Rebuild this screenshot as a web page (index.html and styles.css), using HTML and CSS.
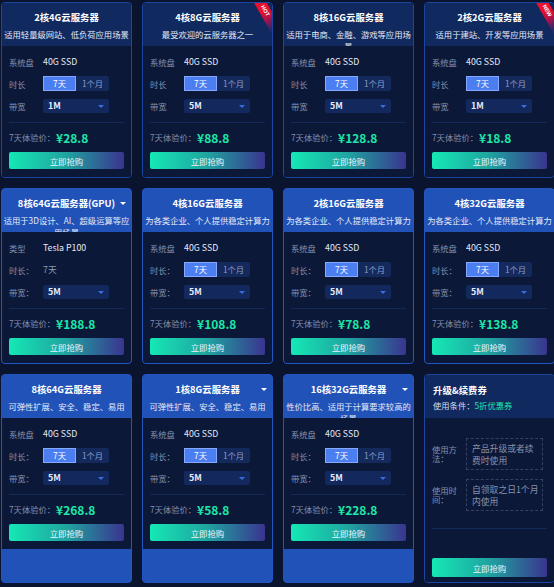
FILE: index.html
```html
<!DOCTYPE html>
<html lang="zh-CN">
<head>
    <meta charset="UTF-8">
    <meta name="viewport" content="width=device-width, initial-scale=1.0">
    <title>云服务器</title>
    <link rel="stylesheet" href="styles.css">
</head>
<body>

    <div class="grid">

        <!-- row 1 -->
        <div class="card">
            <div class="card-head">
                <div class="title">2核4G云服务器</div>
                <div class="sub">适用轻量级网站、低负荷应用场景</div>
            </div>
            <div class="card-body">
                <div class="row"><span class="label">系统盘</span><span class="value">40G SSD</span></div>
                <div class="row"><span class="label">时长</span>
                    <div class="toggle"><span class="opt active">7天</span><span class="opt">1个月</span></div>
                </div>
                <div class="row"><span class="label">带宽</span><div class="select">1M</div></div>
                <div class="divider"></div>
                <div class="price-row"><span class="price-label">7天体验价：</span><span class="price">¥28.8</span></div>
                <button class="buy">立即抢购</button>
            </div>
        </div>

        <div class="card">
            <div class="ribbon">HOT</div>
            <div class="card-head">
                <div class="title">4核8G云服务器</div>
                <div class="sub">最受欢迎的云服务器之一</div>
            </div>
            <div class="card-body">
                <div class="row"><span class="label">系统盘</span><span class="value">40G SSD</span></div>
                <div class="row"><span class="label">时长</span>
                    <div class="toggle"><span class="opt active">7天</span><span class="opt">1个月</span></div>
                </div>
                <div class="row"><span class="label">带宽</span><div class="select">5M</div></div>
                <div class="divider"></div>
                <div class="price-row"><span class="price-label">7天体验价：</span><span class="price">¥88.8</span></div>
                <button class="buy">立即抢购</button>
            </div>
        </div>

        <div class="card">
            <div class="card-head">
                <div class="title">8核16G云服务器</div>
                <div class="sub">适用于电商、金融、游戏等应用场景</div>
            </div>
            <div class="card-body">
                <div class="row"><span class="label">系统盘</span><span class="value">40G SSD</span></div>
                <div class="row"><span class="label">时长</span>
                    <div class="toggle"><span class="opt active">7天</span><span class="opt">1个月</span></div>
                </div>
                <div class="row"><span class="label">带宽</span><div class="select">5M</div></div>
                <div class="divider"></div>
                <div class="price-row"><span class="price-label">7天体验价：</span><span class="price">¥128.8</span></div>
                <button class="buy">立即抢购</button>
            </div>
        </div>

        <div class="card">
            <div class="ribbon">NEW</div>
            <div class="card-head">
                <div class="title">2核2G云服务器</div>
                <div class="sub">适用于建站、开发等应用场景</div>
            </div>
            <div class="card-body">
                <div class="row"><span class="label">系统盘</span><span class="value">40G SSD</span></div>
                <div class="row"><span class="label">时长</span>
                    <div class="toggle"><span class="opt active">7天</span><span class="opt">1个月</span></div>
                </div>
                <div class="row"><span class="label">带宽</span><div class="select">1M</div></div>
                <div class="divider"></div>
                <div class="price-row"><span class="price-label">7天体验价：</span><span class="price">¥18.8</span></div>
                <button class="buy">立即抢购</button>
            </div>
        </div>

        <!-- row 2 -->
        <div class="card blue">
            <div class="card-head">
                <div class="title">8核64G云服务器(GPU)</div>
                <span class="caret"></span>
                <div class="sub">适用于3D设计、AI、超级运算等应用场景</div>
            </div>
            <div class="card-body">
                <div class="row"><span class="label">类型</span><span class="value">Tesla P100</span></div>
                <div class="row"><span class="label">时长：</span><span class="value plain">7天</span></div>
                <div class="row"><span class="label">带宽：</span><div class="select">5M</div></div>
                <div class="divider"></div>
                <div class="price-row"><span class="price-label">7天体验价：</span><span class="price">¥188.8</span></div>
                <button class="buy">立即抢购</button>
            </div>
        </div>

        <div class="card blue">
            <div class="card-head">
                <div class="title">4核16G云服务器</div>
                <div class="sub">为各类企业、个人提供稳定计算力</div>
            </div>
            <div class="card-body">
                <div class="row"><span class="label">系统盘</span><span class="value">40G SSD</span></div>
                <div class="row"><span class="label">时长：</span>
                    <div class="toggle"><span class="opt active">7天</span><span class="opt">1个月</span></div>
                </div>
                <div class="row"><span class="label">带宽：</span><div class="select">5M</div></div>
                <div class="divider"></div>
                <div class="price-row"><span class="price-label">7天体验价：</span><span class="price">¥108.8</span></div>
                <button class="buy">立即抢购</button>
            </div>
        </div>

        <div class="card blue">
            <div class="card-head">
                <div class="title">2核16G云服务器</div>
                <div class="sub">为各类企业、个人提供稳定计算力</div>
            </div>
            <div class="card-body">
                <div class="row"><span class="label">系统盘</span><span class="value">40G SSD</span></div>
                <div class="row"><span class="label">时长：</span>
                    <div class="toggle"><span class="opt active">7天</span><span class="opt">1个月</span></div>
                </div>
                <div class="row"><span class="label">带宽：</span><div class="select">5M</div></div>
                <div class="divider"></div>
                <div class="price-row"><span class="price-label">7天体验价：</span><span class="price">¥78.8</span></div>
                <button class="buy">立即抢购</button>
            </div>
        </div>

        <div class="card blue">
            <div class="card-head">
                <div class="title">4核32G云服务器</div>
                <div class="sub">为各类企业、个人提供稳定计算力</div>
            </div>
            <div class="card-body">
                <div class="row"><span class="label">系统盘</span><span class="value">40G SSD</span></div>
                <div class="row"><span class="label">时长：</span>
                    <div class="toggle"><span class="opt active">7天</span><span class="opt">1个月</span></div>
                </div>
                <div class="row"><span class="label">带宽：</span><div class="select">5M</div></div>
                <div class="divider"></div>
                <div class="price-row"><span class="price-label">7天体验价：</span><span class="price">¥138.8</span></div>
                <button class="buy">立即抢购</button>
            </div>
        </div>

        <!-- row 3 -->
        <div class="card blue">
            <div class="card-head">
                <div class="title">8核64G云服务器</div>
                <div class="sub">可弹性扩展、安全、稳定、易用</div>
            </div>
            <div class="card-body">
                <div class="row"><span class="label">系统盘</span><span class="value">40G SSD</span></div>
                <div class="row"><span class="label">时长：</span>
                    <div class="toggle"><span class="opt active">7天</span><span class="opt">1个月</span></div>
                </div>
                <div class="row"><span class="label">带宽：</span><div class="select">5M</div></div>
                <div class="divider"></div>
                <div class="price-row"><span class="price-label">7天体验价：</span><span class="price">¥268.8</span></div>
                <button class="buy">立即抢购</button>
            </div>
        </div>

        <div class="card blue">
            <div class="card-head">
                <div class="title">1核8G云服务器</div>
                <span class="caret"></span>
                <div class="sub">可弹性扩展、安全、稳定、易用</div>
            </div>
            <div class="card-body">
                <div class="row"><span class="label">系统盘</span><span class="value">40G SSD</span></div>
                <div class="row"><span class="label">时长：</span>
                    <div class="toggle"><span class="opt active">7天</span><span class="opt">1个月</span></div>
                </div>
                <div class="row"><span class="label">带宽：</span><div class="select">5M</div></div>
                <div class="divider"></div>
                <div class="price-row"><span class="price-label">7天体验价：</span><span class="price">¥58.8</span></div>
                <button class="buy">立即抢购</button>
            </div>
        </div>

        <div class="card blue">
            <div class="card-head">
                <div class="title">16核32G云服务器</div>
                <span class="caret"></span>
                <div class="sub">性价比高、适用于计算要求较高的场景</div>
            </div>
            <div class="card-body">
                <div class="row"><span class="label">系统盘</span><span class="value">40G SSD</span></div>
                <div class="row"><span class="label">时长：</span>
                    <div class="toggle"><span class="opt active">7天</span><span class="opt">1个月</span></div>
                </div>
                <div class="row"><span class="label">带宽：</span><div class="select">5M</div></div>
                <div class="divider"></div>
                <div class="price-row"><span class="price-label">7天体验价：</span><span class="price">¥228.8</span></div>
                <button class="buy">立即抢购</button>
            </div>
        </div>

        <div class="card coupon">
            <div class="card-head">
                <div class="title">升级&amp;续费券</div>
                <div class="cond">使用条件：<span class="green">5折优惠券</span></div>
            </div>
            <div class="card-body">
                <div class="c-row">
                    <span class="c-label">使用方法：</span>
                    <div class="c-box">产品升级或者续费时使用</div>
                </div>
                <div class="c-row">
                    <span class="c-label">使用时间：</span>
                    <div class="c-box">自领取之日1个月内使用</div>
                </div>
                <div class="divider"></div>
                <button class="buy">立即抢购</button>
            </div>
        </div>

    </div>

</body>
</html>
```

FILE: styles.css
```css
body {
    margin: 0;
    background-color: #0a142f;
    font-family: "Noto Sans CJK SC", "Noto Sans", sans-serif;
    font-size: 8.3px;
    color: #dfe6f5;
}
.grid {
    display: grid;
    grid-template-columns: repeat(4, 131px);
    grid-template-rows: 176px 176px 209px;
    column-gap: 10px;
    row-gap: 10px;
    padding: 2px 0 0 1px;
}
.card {
    position: relative;
    display: flex;
    flex-direction: column;
    background-color: #0b1838;
    border: 1px solid #1b47a3;
    border-radius: 4px;
    overflow: hidden;
}
.card.blue {
    background-color: #2152b8;
    border-color: #2456bf;
}
.card-head {
    position: relative;
    height: 43px;
    flex-shrink: 0;
    padding: 7px 0 0;
    box-sizing: border-box;
    text-align: center;
    background-color: #10295f;
    overflow: hidden;
}
.card.blue .card-head {
    background-color: transparent;
}
.title {
    font-size: 9.4px;
    font-weight: bold;
    line-height: 14px;
    color: #ffffff;
}
.sub {
    margin-top: 4px;
    line-height: 12px;
    color: #e4eaf8;
}
.caret {
    position: absolute;
    right: 5px;
    top: 13px;
    border-left: 3px solid transparent;
    border-right: 3px solid transparent;
    border-top: 3px solid #ffffff;
}
.ribbon {
    position: absolute;
    left: 93px;
    top: 4px;
    width: 60px;
    height: 11px;
    transform: rotate(60deg);
    background: linear-gradient(90deg, #e8102c 45%, #b0124a 60%, rgba(70, 40, 140, 0.35) 80%);
    color: #ffffff;
    font-family: "Liberation Sans", sans-serif;
    font-size: 5.5px;
    font-weight: bold;
    line-height: 11px;
    text-align: center;
    text-indent: -4px;
    z-index: 2;
}
.card-body {
    display: flex;
    flex-direction: column;
    background-color: #0b1838;
    padding: 8px 7px 8px;
}
.row {
    display: flex;
    align-items: center;
    height: 15px;
    margin-bottom: 7px;
}
.row:nth-child(3) {
    margin-bottom: 0;
}
.label {
    width: 34px;
    flex-shrink: 0;
    color: #8590ad;
}
.value {
    color: #e2e8f6;
    font-size: 8.8px;
}
.value.plain {
    color: #8e98b3;
}
.toggle {
    display: flex;
    width: 66px;
    height: 15px;
    background-color: #14295c;
    border-radius: 2px;
}
.opt {
    width: 33px;
    box-sizing: border-box;
    text-align: center;
    line-height: 15px;
    color: #8c9cc8;
}
.opt.active {
    background-color: #4b7ef0;
    border: 1px solid #86a9ff;
    line-height: 13px;
    color: #ffffff;
}
.select {
    position: relative;
    width: 66px;
    height: 14px;
    box-sizing: border-box;
    padding-left: 5px;
    line-height: 14px;
    background-color: #13295d;
    border-radius: 2px;
    color: #e6ecfa;
    font-size: 8.8px;
    font-weight: bold;
}
.select::after {
    content: "";
    position: absolute;
    right: 5px;
    top: 6px;
    border-left: 3px solid transparent;
    border-right: 3px solid transparent;
    border-top: 3px solid #3b6de0;
}
.divider {
    margin-top: 9px;
    border-top: 1px solid #14295a;
}
.price-row {
    display: flex;
    align-items: center;
    height: 14px;
    margin-top: 7px;
}
.price-label {
    color: #8590ad;
}
.price {
    margin-left: 1px;
    color: #1ee8a8;
    font-size: 12px;
    font-weight: bold;
}
.buy {
    height: 17px;
    margin-top: 8px;
    padding: 0;
    border: none;
    border-radius: 2px;
    background: linear-gradient(90deg, #15e8b5, #1fa3a0 50%, #3a348f);
    color: #eef4ff;
    font-family: inherit;
    font-size: 8.4px;
    cursor: pointer;
}
.buy:hover {
    background: linear-gradient(90deg, #12d4a5, #37308a);
}

/* coupon card */
.coupon .card-head {
    text-align: left;
    padding: 8px 8px 0;
}
.coupon .title {
    line-height: 14px;
}
.cond {
    margin-top: 2px;
    line-height: 12px;
    color: #d4dcee;
}
.green {
    color: #1ee8a8;
}
.coupon .card-body {
    flex: 1;
    padding: 20px 7px 5px;
}
.c-row {
    display: flex;
    align-items: center;
    margin-bottom: 9px;
}
.c-label {
    width: 27px;
    margin-right: 7px;
    line-height: 9.5px;
    color: #8590ad;
}
.c-box {
    width: 77px;
    height: 32px;
    box-sizing: border-box;
    padding: 4px 2px 4px 5px;
    border: 1px dashed #34415f;
    font-size: 8.8px;
    line-height: 11.5px;
    color: #8791ab;
}
.coupon .divider {
    margin-top: 8px;
}
.coupon .buy {
    height: 19px;
    margin-top: auto;
}
```
